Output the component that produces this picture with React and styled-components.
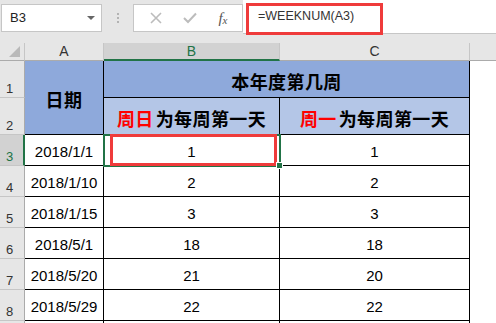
import React from "react";
import styled, { createGlobalStyle } from "styled-components";

const GlobalStyle = createGlobalStyle`
  html, body {
    margin: 0;
    padding: 0;
    background: #ffffff;
    overflow: hidden;
  }
  body {
    width: 496px;
    height: 323px;
    font-family: "Liberation Sans", Arial, sans-serif;
  }
`;

const GREEN = "#217346";

const rows = [
  { date: "2018/1/1", sun: 1, mon: 1 },
  { date: "2018/1/10", sun: 2, mon: 2 },
  { date: "2018/1/15", sun: 3, mon: 3 },
  { date: "2018/5/1", sun: 18, mon: 18 },
  { date: "2018/5/20", sun: 21, mon: 20 },
  { date: "2018/5/29", sun: 22, mon: 22 },
];

const App = () => {
  return (
    <Window>
      <GlobalStyle />
      <FormulaBar>
        <NameBox>
          <span>B3</span>
          <DropArrow />
        </NameBox>
        <Grip>
          <i />
          <i />
          <i />
        </Grip>
        <FxBox>
          <FxIcon>
            <svg width="12" height="12" viewBox="0 0 12 12">
              <path d="M1 1 L11 11 M11 1 L1 11" stroke="#bcbcbc" strokeWidth="1.6" fill="none" />
            </svg>
          </FxIcon>
          <FxIcon>
            <svg width="14" height="12" viewBox="0 0 14 12">
              <path d="M1 6 L5 10 L13 1.5" stroke="#bcbcbc" strokeWidth="2" fill="none" />
            </svg>
          </FxIcon>
          <FxLabel>
            f<sub>x</sub>
          </FxLabel>
        </FxBox>
        <FormulaInput>
          <FormulaText>=WEEKNUM(A3)</FormulaText>
          <Highlight $top={3} $left={3} $width={137} $height={32} />
        </FormulaInput>
      </FormulaBar>

      <Sheet>
        <Corner>
          <svg width="11" height="11" viewBox="0 0 11 11">
            <path d="M11 0 L11 11 L0 11 Z" fill="#b9b9b9" />
          </svg>
        </Corner>
        <ColHead>A</ColHead>
        <ColHead $selected>B</ColHead>
        <ColHead>C</ColHead>
        <ColHead $blank />

        <RowHead>1</RowHead>
        <Cell $fill="#8ea9db" $rowSpan={2} $bold>
          日期
        </Cell>
        <Cell $fill="#8ea9db" $colSpan={2} $bold>
          本年度第几周
        </Cell>
        <Filler />

        <RowHead>2</RowHead>
        <Cell $fill="#b4c6e7" $bold>
          <Red>周日</Red>为每周第一天
        </Cell>
        <Cell $fill="#b4c6e7" $bold>
          <Red>周一</Red>为每周第一天
        </Cell>
        <Filler />

        {rows.map((r, i) => (
          <React.Fragment key={r.date}>
            <RowHead $selected={i === 0}>{i + 3}</RowHead>
            <Cell>{r.date}</Cell>
            <Cell $active={i === 0}>
              {r.sun}
              {i === 0 && (
                <>
                  <Highlight $top={-1} $left={6} $width={167} $height={32} />
                  <FillHandle />
                </>
              )}
            </Cell>
            <Cell>{r.mon}</Cell>
            <Filler />
          </React.Fragment>
        ))}

        {/* row 9 only peeks in at the bottom edge */}
        <RowHead />
        <Cell />
        <Cell />
        <Cell />
        <Filler />
      </Sheet>
    </Window>
  );
};

const Window = styled.div`
  width: 496px;
  height: 323px;
  overflow: hidden;
  background: #e6e6e6;
`;

const FormulaBar = styled.div`
  display: flex;
  align-items: flex-start;
  height: 43px;
  background: #e6e6e6;
`;

const NameBox = styled.div`
  box-sizing: border-box;
  display: flex;
  align-items: center;
  justify-content: space-between;
  width: 101px;
  height: 28px;
  margin: 4px 0 0 1px;
  padding: 0 6px 1px 8px;
  background: #fff;
  border: 1px solid #c6c6c6;
  font-size: 13px;
  color: #222;
`;

const DropArrow = styled.span`
  width: 0;
  height: 0;
  border-left: 4px solid transparent;
  border-right: 4px solid transparent;
  border-top: 4px solid #666;
`;

const Grip = styled.div`
  display: flex;
  flex-direction: column;
  align-items: center;
  gap: 2px;
  width: 31px;
  margin-top: 13px;

  i {
    width: 2px;
    height: 2px;
    background: #b3b3b3;
  }
`;

const FxBox = styled.div`
  box-sizing: border-box;
  display: flex;
  align-items: center;
  justify-content: space-around;
  width: 110px;
  height: 28px;
  margin-top: 4px;
  padding: 0 4px 0 6px;
  background: #fff;
  border: 1px solid #c6c6c6;
`;

const FxIcon = styled.span`
  display: flex;
  align-items: center;
`;

const FxLabel = styled.span`
  font-family: "Liberation Serif", "Times New Roman", serif;
  font-style: italic;
  font-size: 15px;
  color: #555;

  sub {
    font-size: 11px;
    vertical-align: -1px;
  }
`;

const FormulaInput = styled.div`
  position: relative;
  box-sizing: border-box;
  flex: 1;
  display: flex;
  align-items: center;
  height: 34px;
  padding: 0 0 2px 15px;
  background: #fff;
  border-bottom: 1px solid #c6c6c6;
`;

const FormulaText = styled.span`
  font-size: 12.5px;
  color: #333;
`;

const Highlight = styled.div`
  position: absolute;
  top: ${(p) => p.$top}px;
  left: ${(p) => p.$left}px;
  width: ${(p) => p.$width}px;
  height: ${(p) => p.$height}px;
  box-sizing: border-box;
  border: 3px solid #ef3b3b;
  pointer-events: none;
`;

const Sheet = styled.div`
  display: grid;
  grid-template-columns: 25px 79px 176px 190px 1fr;
  grid-template-rows: 18px 37px 37px repeat(6, 31px) 1fr;
  height: 280px;
  background: #fff;
`;

const Corner = styled.div`
  display: flex;
  align-items: flex-end;
  justify-content: flex-end;
  padding: 0 4px 3px 0;
  background: #e6e6e6;
  border-right: 1px solid #c6c6c6;
  border-bottom: 1px solid #ababab;
`;

const ColHead = styled.div`
  box-sizing: border-box;
  display: flex;
  align-items: center;
  justify-content: center;
  padding-bottom: 1px;
  font-size: 14px;
  color: ${(p) => (p.$selected ? GREEN : "#333")};
  background: ${(p) => (p.$selected ? "#d2d2d2" : "#e6e6e6")};
  border-right: ${(p) => (p.$blank ? "none" : "1px solid #c6c6c6")};
  border-bottom: ${(p) => (p.$selected ? `2px solid ${GREEN}` : "1px solid #ababab")};
`;

const RowHead = styled.div`
  box-sizing: border-box;
  display: flex;
  align-items: flex-end;
  padding: 0 0 2px 6px;
  font-size: 13px;
  line-height: 13px;
  color: ${(p) => (p.$selected ? GREEN : "#333")};
  background: ${(p) => (p.$selected ? "#d2d2d2" : "#e6e6e6")};
  border-bottom: 1px solid #c6c6c6;
  border-right: ${(p) => (p.$selected ? `2px solid ${GREEN}` : "1px solid #ababab")};
`;

const Cell = styled.div`
  position: relative;
  box-sizing: border-box;
  display: flex;
  align-items: center;
  justify-content: center;
  padding-top: ${(p) => (p.$bold ? "3px" : "2px")};
  grid-row: ${(p) => (p.$rowSpan ? `span ${p.$rowSpan}` : "auto")};
  grid-column: ${(p) => (p.$colSpan ? `span ${p.$colSpan}` : "auto")};
  background: ${(p) => p.$fill || "#fff"};
  border-right: 1px solid #000;
  border-bottom: 1px solid #000;
  font-family: ${(p) =>
    p.$bold
      ? `"Noto Sans CJK SC", "Microsoft YaHei", sans-serif`
      : `"Liberation Sans", Arial, sans-serif`};
  font-size: ${(p) => (p.$bold ? "18px" : "15px")};
  font-weight: ${(p) => (p.$bold ? 700 : 400)};
  letter-spacing: ${(p) => (p.$bold ? "0.4px" : "normal")};
  color: #000;
  outline: ${(p) => (p.$active ? `2px solid ${GREEN}` : "none")};
  outline-offset: -1px;
  z-index: ${(p) => (p.$active ? 2 : "auto")};
`;

const Red = styled.span`
  color: #ff0000;
  margin-right: 2px;
`;

const Filler = styled.div`
  background: #fff;
`;

const FillHandle = styled.div`
  position: absolute;
  right: -4px;
  bottom: -4px;
  width: 5px;
  height: 5px;
  background: ${GREEN};
  border: 1px solid #fff;
`;

export default App;
